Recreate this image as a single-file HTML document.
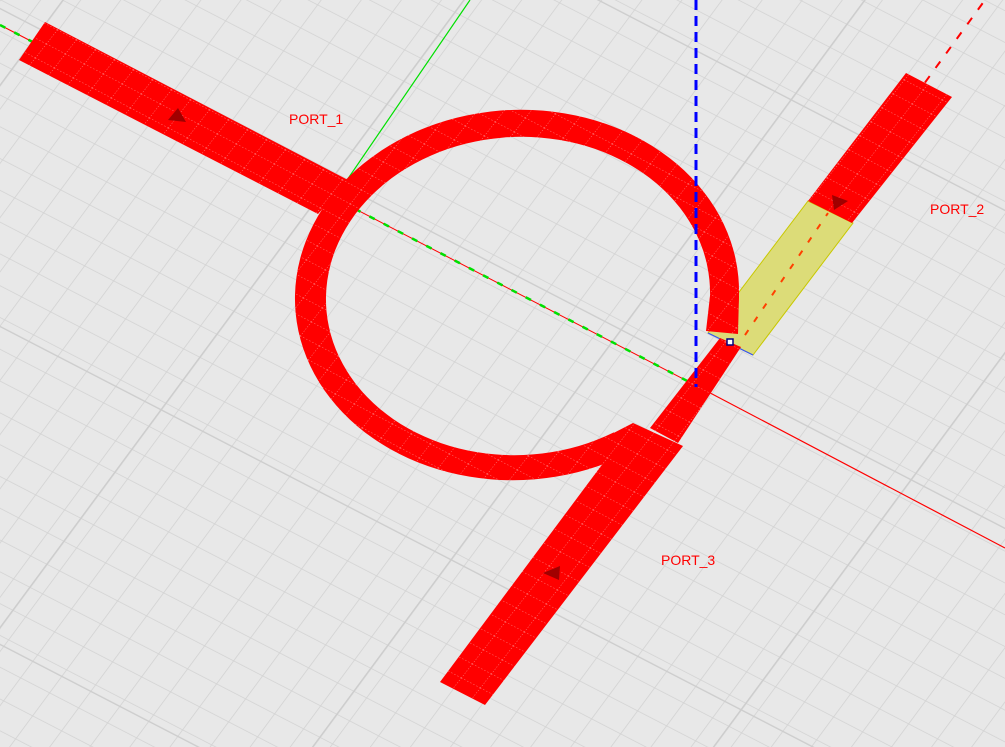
<!DOCTYPE html>
<html><head><meta charset="utf-8"><style>
html,body{margin:0;padding:0;background:#e8e8e8;}
svg{display:block;}
text{font-family:"Liberation Sans",sans-serif;font-size:14px;fill:#ff0000;}
</style></head><body>
<svg width="1005" height="747" viewBox="0 0 1005 747" xmlns="http://www.w3.org/2000/svg">
<defs>
<pattern id="g" patternUnits="userSpaceOnUse" width="1" height="1" patternTransform="matrix(29,15,17,-23,0,0)">
<path d="M0 0H1M0 0V1" stroke="#d2d2d2" stroke-width="0.05" fill="none"/>
</pattern>
<pattern id="G" patternUnits="userSpaceOnUse" width="1" height="1" patternTransform="matrix(290,150,170,-230,40,30)">
<path d="M0 0H1M0 0V1" stroke="#cdcdcd" stroke-width="0.01" fill="none"/>
</pattern>
<pattern id="rg" patternUnits="userSpaceOnUse" width="1" height="1" patternTransform="matrix(19,10,11,-14,0,0)">
<rect width="1" height="1" fill="#ff0000"/>
<path d="M0 0H1M0 0V1" stroke="#ff9090" stroke-width="0.05" stroke-dasharray="0.06 0.1" fill="none"/>
</pattern>
<clipPath id="gap">
<path d="M0 0H1005V747H0Z M517 295 L1000 340 L760 640 Z" clip-rule="evenodd"/>
</clipPath>
</defs>
<rect width="1005" height="747" fill="#e8e8e8"/>
<rect width="1005" height="747" fill="url(#g)"/>
<rect width="1005" height="747" fill="url(#G)"/>

<line x1="330" y1="205" x2="470" y2="0" stroke="#00e000" stroke-width="1.2"/>
<line x1="695" y1="385" x2="1005" y2="548" stroke="#ff0000" stroke-width="1.2"/>
<line x1="0" y1="25" x2="695" y2="385" stroke="#ff0000" stroke-width="1"/>
<line x1="0" y1="25" x2="695" y2="385" stroke="#00e000" stroke-width="2.5" stroke-dasharray="6 10"/>
<line x1="745" y1="330" x2="985" y2="0" stroke="#ff0000" stroke-width="2" stroke-dasharray="8 10"/>

<polygon points="808,201 853,223 753,355 708,333" fill="#dcdc78" stroke="#c8c800" stroke-width="1"/>
<line x1="745" y1="335" x2="828" y2="213" stroke="#ff4000" stroke-width="2" stroke-dasharray="6 10"/>
<line x1="708" y1="333" x2="753" y2="355" stroke="#3050ff" stroke-width="1"/>

<polygon points="45,22 19,60 318,214 348,180" fill="url(#rg)"/>
<g clip-path="url(#gap)">
<path fill-rule="evenodd" fill="url(#rg)" d="M295 295 A222 185 -3 1 0 739 295 A222 185 -3 1 0 295 295Z M326 296 A192 159 -3 1 1 710 296 A192 159 -3 1 1 326 296Z"/>
</g>
<polygon points="710,296 739,296 738,334 706,331" fill="url(#rg)"/>
<polygon points="720,338 741,347 678,443 650,428" fill="url(#rg)"/>
<polygon points="633,423 683,446 485,705 440,682" fill="url(#rg)"/>
<polygon points="600,440 633,423 640,440 602,468" fill="url(#rg)"/>
<polygon points="906,73 952,97 852,223 808,201" fill="url(#rg)"/>

<line x1="696" y1="0" x2="696" y2="387" stroke="#0000ff" stroke-width="3" stroke-dasharray="10 6"/>
<rect x="727" y="339" width="6" height="6" fill="#fff" stroke="#000080" stroke-width="1.5"/>

<polygon points="168,120 178,108 186,122" fill="#a00000"/>
<polygon points="832,195 848,201 834,210" fill="#a00000"/>
<polygon points="543,573 560,566 559,580" fill="#a00000"/>

<text x="289" y="124">PORT_1</text>
<text x="930" y="214">PORT_2</text>
<text x="661" y="565">PORT_3</text>
</svg>
</body></html>
